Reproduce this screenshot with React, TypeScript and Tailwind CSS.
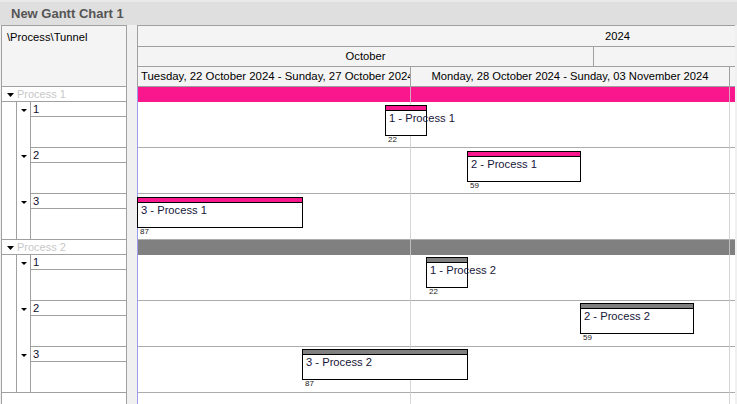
import React from 'react';

type Task = { left: number; width: number; top: number; label: string; num: string };
type Group = { name: string; bar: string; band: string; tasks: Task[] };

const groups: Group[] = [
  {
    name: 'Process 1',
    bar: 'bg-[#fa168c]',
    band: 'bg-[#fa168c]',
    tasks: [
      { left: 247, width: 42, top: 3, label: '1 - Process 1', num: '22' },
      { left: 329, width: 114, top: 3, label: '2 - Process 1', num: '59' },
      { left: -1, width: 166, top: 3, label: '3 - Process 1', num: '87' },
    ],
  },
  {
    name: 'Process 2',
    bar: 'bg-[#808080]',
    band: 'bg-[#808080]',
    tasks: [
      { left: 288, width: 42, top: 2, label: '1 - Process 2', num: '22' },
      { left: 442, width: 114, top: 2, label: '2 - Process 2', num: '59' },
      { left: 164, width: 166, top: 2, label: '3 - Process 2', num: '87' },
    ],
  },
];

function Tri({ w = 7, h = 4 }: { w?: number; h?: number }) {
  return (
    <svg width={w} height={h} viewBox={`0 0 ${w} ${h}`} className="block">
      <polygon points={`0,0 ${w},0 ${w / 2},${h}`} fill="#000" />
    </svg>
  );
}

function TaskBox({ t, band }: { t: Task; band: string }) {
  return (
    <div
      className="absolute z-[2] h-[31px] border border-black bg-white"
      style={{ left: t.left, width: t.width, top: t.top }}
    >
      <div className={`h-[5px] border-b border-black ${band}`} />
      <div className="whitespace-nowrap pl-[3px] text-[11.2px] leading-[14px] text-[#16163a]">{t.label}</div>
      <div className="absolute left-[2px] top-[30px] text-[8px] leading-none text-[#202020]">{t.num}</div>
    </div>
  );
}

function LeftGroup({ g }: { g: Group }) {
  return (
    <div>
      <div className="flex h-[15px] items-center border-b border-[#a0a0a0]">
        <div className="flex w-[15px] justify-start pl-[5px] pt-[1px]">
          <Tri />
        </div>
        <span className="text-[11px] leading-none text-[#c8c8c8]">{g.name}</span>
      </div>
      <div className="flex border-b border-[#a0a0a0]">
        <div className="w-[15px] border-r border-[#a0a0a0]" />
        <div className="flex-1">
          {[1, 2, 3].map((n, i) => (
            <div key={n} className={`flex ${i < 2 ? 'h-[46px]' : 'h-[45px]'}`}>
              <div className="w-[14px] border-r border-[#a0a0a0] pl-[4px] pt-[7px]">
                <Tri w={6} h={3} />
              </div>
              <div className="flex flex-1 flex-col">
                <div className="h-[15px] border-b border-[#a0a0a0] pl-[2px] text-[11.2px] leading-[14px] text-[#101030]">
                  {n}
                </div>
                {i < 2 ? <div className="h-[31px] border-b border-[#a0a0a0]" /> : <div className="h-[30px]" />}
              </div>
            </div>
          ))}
        </div>
      </div>
    </div>
  );
}

export default function App() {
  return (
    <div className="flex h-[404px] w-[737px] flex-col overflow-hidden bg-[#f0f0f0] font-['Liberation_Sans',Arial,sans-serif] text-[11.2px] text-black">
      <div className="flex h-[25px] shrink-0 items-center border-t-2 border-[#e9e9e9] bg-[#dfdfdf] pl-[11px] text-[13px] font-bold text-[#555555]">
        New Gantt Chart 1
      </div>
      <div className="flex min-h-0 flex-1">
        {/* Left tree panel */}
        <div className="ml-[1px] flex w-[126px] shrink-0 flex-col border-x border-[#a0a0a0] bg-white">
          <div className="h-[62px] shrink-0 border-y border-[#a0a0a0] bg-[#f4f4f4] pl-[5px] pt-[4px] leading-[14px]">
            \Process\Tunnel
          </div>
          {groups.map((g) => (
            <LeftGroup key={g.name} g={g} />
          ))}
        </div>
        {/* Splitter */}
        <div className="w-[10px] shrink-0 bg-[#f0f0f0]" />
        {/* Chart */}
        <div className="flex w-[598px] shrink-0 flex-col">
          <div className="h-[62px] shrink-0 border-l border-t border-[#a0a0a0] bg-[#f4f4f4]">
            <div className="flex h-[21px] items-center border-b border-[#a0a0a0] pl-[467px]">2024</div>
            <div className="flex h-[20px] border-b border-[#a0a0a0]">
              <div className="flex w-[456px] items-center justify-center border-r border-[#a0a0a0]">October</div>
              <div className="flex-1" />
            </div>
            <div className="flex h-[20px] border-b border-[#a0a0a0]">
              <div className="flex w-[273px] items-center overflow-hidden whitespace-nowrap border-r border-[#a0a0a0] pl-[3px] text-[11.4px]">
                Tuesday, 22 October 2024 - Sunday, 27 October 2024
              </div>
              <div className="flex w-[319px] items-center justify-center whitespace-nowrap border-r border-[#a0a0a0]">
                Monday, 28 October 2024 - Sunday, 03 November 2024
              </div>
              <div className="flex-1" />
            </div>
          </div>
          <div className="relative flex-1 border-l border-[#9c9cec] bg-white">
            {groups.map((g) => (
              <div key={g.name}>
                <div className={`h-[15px] ${g.bar}`} />
                {g.tasks.map((t, i) => (
                  <div key={i} className="relative h-[46px] border-b border-[#acacac]">
                    <TaskBox t={t} band={g.band} />
                  </div>
                ))}
              </div>
            ))}
            <div className="absolute bottom-0 left-[272px] top-0 z-[1] w-px bg-[#cccccc]/80" />
            <div className="absolute bottom-0 left-[591px] top-0 z-[1] w-px bg-[#cccccc]/80" />
          </div>
        </div>
      </div>
    </div>
  );
}
